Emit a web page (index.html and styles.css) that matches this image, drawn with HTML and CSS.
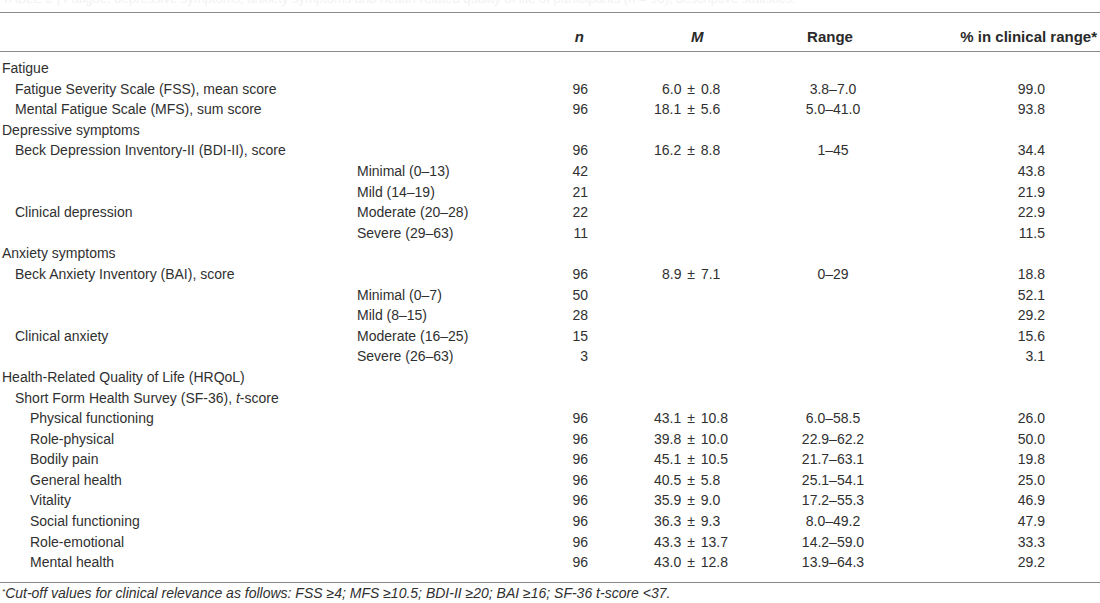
FILE: index.html
```html
<!DOCTYPE html>
<html lang="en">
<head>
<meta charset="utf-8">
<title>Table</title>
<link rel="stylesheet" href="styles.css">
</head>
<body>
<div class="caption"><div class="caption-text">TABLE 2 | Fatigue, depressive symptoms, anxiety symptoms and health-related quality of life of participants (n = 96), descriptive statistics.</div></div>
<table class="data">
  <colgroup>
    <col class="c-label"><col class="c-sub"><col class="c-n"><col class="c-m"><col class="c-range"><col class="c-pct">
  </colgroup>
  <thead>
    <tr>
      <th class="label"></th><th class="sub"></th>
      <th class="n"><i>n</i></th>
      <th class="m"><i>M</i></th>
      <th class="range">Range</th>
      <th class="pct">% in clinical range*</th>
    </tr>
  </thead>
  <tbody>
    <tr class="first"><td class="label l0">Fatigue</td><td></td><td></td><td></td><td></td><td></td></tr>
    <tr><td class="label l1">Fatigue Severity Scale (FSS), mean score</td><td></td><td class="n">96</td><td class="m pad">6.0 ± 0.8</td><td class="range">3.8–7.0</td><td class="pct">99.0</td></tr>
    <tr><td class="label l1">Mental Fatigue Scale (MFS), sum score</td><td></td><td class="n">96</td><td class="m">18.1 ± 5.6</td><td class="range">5.0–41.0</td><td class="pct">93.8</td></tr>
    <tr><td class="label l0">Depressive symptoms</td><td></td><td></td><td></td><td></td><td></td></tr>
    <tr><td class="label l1">Beck Depression Inventory-II (BDI-II), score</td><td></td><td class="n">96</td><td class="m">16.2 ± 8.8</td><td class="range">1–45</td><td class="pct">34.4</td></tr>
    <tr><td class="label"></td><td class="sub">Minimal (0–13)</td><td class="n">42</td><td></td><td></td><td class="pct">43.8</td></tr>
    <tr><td class="label"></td><td class="sub">Mild (14–19)</td><td class="n">21</td><td></td><td></td><td class="pct">21.9</td></tr>
    <tr><td class="label l1">Clinical depression</td><td class="sub">Moderate (20–28)</td><td class="n">22</td><td></td><td></td><td class="pct">22.9</td></tr>
    <tr><td class="label"></td><td class="sub">Severe (29–63)</td><td class="n">11</td><td></td><td></td><td class="pct">11.5</td></tr>
    <tr><td class="label l0">Anxiety symptoms</td><td></td><td></td><td></td><td></td><td></td></tr>
    <tr><td class="label l1">Beck Anxiety Inventory (BAI), score</td><td></td><td class="n">96</td><td class="m pad">8.9 ± 7.1</td><td class="range">0–29</td><td class="pct">18.8</td></tr>
    <tr><td class="label"></td><td class="sub">Minimal (0–7)</td><td class="n">50</td><td></td><td></td><td class="pct">52.1</td></tr>
    <tr><td class="label"></td><td class="sub">Mild (8–15)</td><td class="n">28</td><td></td><td></td><td class="pct">29.2</td></tr>
    <tr><td class="label l1">Clinical anxiety</td><td class="sub">Moderate (16–25)</td><td class="n">15</td><td></td><td></td><td class="pct">15.6</td></tr>
    <tr><td class="label"></td><td class="sub">Severe (26–63)</td><td class="n">3</td><td></td><td></td><td class="pct">3.1</td></tr>
    <tr><td class="label l0">Health-Related Quality of Life (HRQoL)</td><td></td><td></td><td></td><td></td><td></td></tr>
    <tr><td class="label l1">Short Form Health Survey (SF-36), <i>t</i>-score</td><td></td><td></td><td></td><td></td><td></td></tr>
    <tr><td class="label l2">Physical functioning</td><td></td><td class="n">96</td><td class="m">43.1 ± 10.8</td><td class="range">6.0–58.5</td><td class="pct">26.0</td></tr>
    <tr><td class="label l2">Role-physical</td><td></td><td class="n">96</td><td class="m">39.8 ± 10.0</td><td class="range">22.9–62.2</td><td class="pct">50.0</td></tr>
    <tr><td class="label l2">Bodily pain</td><td></td><td class="n">96</td><td class="m">45.1 ± 10.5</td><td class="range">21.7–63.1</td><td class="pct">19.8</td></tr>
    <tr><td class="label l2">General health</td><td></td><td class="n">96</td><td class="m">40.5 ± 5.8</td><td class="range">25.1–54.1</td><td class="pct">25.0</td></tr>
    <tr><td class="label l2">Vitality</td><td></td><td class="n">96</td><td class="m">35.9 ± 9.0</td><td class="range">17.2–55.3</td><td class="pct">46.9</td></tr>
    <tr><td class="label l2">Social functioning</td><td></td><td class="n">96</td><td class="m">36.3 ± 9.3</td><td class="range">8.0–49.2</td><td class="pct">47.9</td></tr>
    <tr><td class="label l2">Role-emotional</td><td></td><td class="n">96</td><td class="m">43.3 ± 13.7</td><td class="range">14.2–59.0</td><td class="pct">33.3</td></tr>
    <tr class="last"><td class="label l2">Mental health</td><td></td><td class="n">96</td><td class="m">43.0 ± 12.8</td><td class="range">13.9–64.3</td><td class="pct">29.2</td></tr>
  </tbody>
</table>
<div class="footnote"><sup>*</sup>Cut-off values for clinical relevance as follows: FSS ≥4; MFS ≥10.5; BDI-II ≥20; BAI ≥16; SF-36 t-score &lt;37.</div>
</body>
</html>
```

FILE: styles.css
```css
html, body {
  margin: 0;
  padding: 0;
  background: #ffffff;
}

body {
  font-family: "Liberation Sans", Arial, Helvetica, sans-serif;
  font-size: 14px;
  color: #303030;
  width: 1100px;
}

.caption {
  height: 12px;
  overflow: hidden;
}

.caption-text {
  margin-top: -9px;
  line-height: 16px;
  font-size: 13px;
  color: #f2f2f2;
  white-space: nowrap;
  padding-left: 2px;
}

.data {
  width: 1100px;
  border-collapse: collapse;
  table-layout: fixed;
  border-top: 1px solid #8a8a8a;
}

.c-label { width: 357px; }
.c-sub { width: 188px; }
.c-n { width: 55px; }
.c-m { width: 160px; }
.c-range { width: 140px; }
.c-pct { width: 200px; }

.data th {
  height: 34px;
  padding: 0 0 4px 0;
  vertical-align: bottom;
  font-weight: bold;
  font-size: 15px;
  line-height: 20px;
  color: #2a2a2a;
  border-bottom: 1px solid #8a8a8a;
  white-space: nowrap;
}

.data td {
  padding: 0;
  line-height: 20.6px;
  height: 20.6px;
  white-space: nowrap;
  vertical-align: middle;
}

.data tr.first td { padding-top: 6px; }
.data tr.last td { padding-bottom: 9px; }

.label { text-align: left; }
.l0 { padding-left: 2px !important; }
.l1 { padding-left: 15px !important; }
.l2 { padding-left: 30px !important; }

.sub { text-align: left; }

th.n { text-align: right; padding-right: 16px; }
td.n { text-align: right; padding-right: 12px; }

th.m { text-align: left; padding-left: 91px; }
td.m { text-align: left; padding-left: 54px; word-spacing: 2px; }
td.m.pad { padding-left: 62px; }

th.range { text-align: center; }
td.range { text-align: center; padding-left: 6px; }

th.pct { text-align: right; padding-right: 3px; }
td.pct { text-align: right; padding-right: 55px; }

.footnote {
  border-top: 1px solid #8a8a8a;
  font-style: italic;
  font-size: 14px;
  line-height: 16px;
  padding: 2px 0 0 2px;
  color: #303030;
  white-space: nowrap;
}

.footnote sup {
  font-size: 8px;
  vertical-align: 4px;
  line-height: 0;
}
```
